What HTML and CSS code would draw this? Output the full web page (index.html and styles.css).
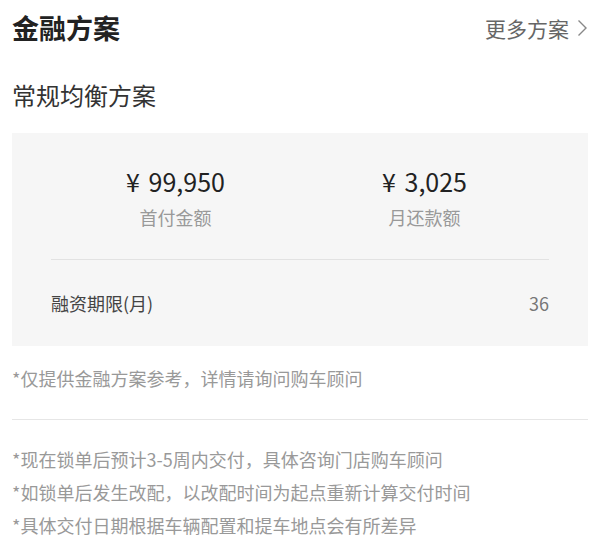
FILE: index.html
```html
<!DOCTYPE html>
<html lang="zh-CN">
<head>
  <meta charset="UTF-8">
  <meta name="viewport" content="width=device-width, initial-scale=1.0">
  <title>金融方案</title>
  <link rel="stylesheet" href="styles.css">
</head>
<body>
  <div class="page">
    <div class="header">
      <h1 class="title">金融方案</h1>
      <a class="more" href="#">更多方案
        <svg class="chevron" width="11" height="18" viewBox="0 0 11 18">
          <path d="M1.5 1.5 L9 9 L1.5 16.5" fill="none" stroke="#888" stroke-width="1.4"/>
        </svg>
      </a>
    </div>

    <h2 class="plan-name">常规均衡方案</h2>

    <div class="card">
      <div class="stats">
        <div class="stat">
          <div class="amount">¥ 99,950</div>
          <div class="label">首付金额</div>
        </div>
        <div class="stat">
          <div class="amount">¥ 3,025</div>
          <div class="label">月还款额</div>
        </div>
      </div>
      <div class="term-row">
        <span>融资期限(月)</span>
        <span class="term-value">36</span>
      </div>
    </div>

    <p class="note">*仅提供金融方案参考，详情请询问购车顾问</p>

    <div class="notes">
      <p>*现在锁单后预计3-5周内交付，具体咨询门店购车顾问</p>
      <p>*如锁单后发生改配，以改配时间为起点重新计算交付时间</p>
      <p>*具体交付日期根据车辆配置和提车地点会有所差异</p>
    </div>
  </div>
</body>
</html>
```

FILE: styles.css
```css
body {
  font-family: "Noto Sans CJK SC", "Noto Sans", sans-serif;
  margin: 0;
  padding: 0;
  background-color: #fff;
  color: #333;
}
.page {
  padding: 0 7px 0 12px;
}
.header {
  display: flex;
  justify-content: space-between;
  align-items: center;
  height: 56px;
}
.title {
  margin: 0;
  font-size: 27px;
  font-weight: bold;
  color: #222;
  line-height: 36px;
}
.more {
  display: flex;
  align-items: center;
  gap: 8px;
  font-size: 21px;
  color: #666;
  text-decoration: none;
}
.plan-name {
  margin: 22px 0 0;
  font-size: 24px;
  font-weight: normal;
  color: #333;
  line-height: 34px;
}
.card {
  margin-top: 21px;
  background-color: #f6f6f6;
  padding: 0 39px;
}
.stats {
  display: flex;
  padding: 31px 0 29px;
  border-bottom: 1px solid #e2e2e2;
}
.stat {
  flex: 1;
  text-align: center;
}
.amount {
  font-size: 25px;
  line-height: 35px;
  color: #222;
  word-spacing: 3px;
}
.label {
  margin-top: 5px;
  font-size: 18px;
  line-height: 26px;
  color: #999;
}
.term-row {
  display: flex;
  justify-content: space-between;
  align-items: center;
  height: 86px;
  font-size: 18px;
  color: #444;
}
.term-value {
  color: #777;
}
.note {
  margin: 0;
  padding: 19px 0 28px;
  font-size: 18px;
  line-height: 26px;
  color: #999;
  border-bottom: 1px solid #e6e6e6;
}
.notes {
  padding-top: 23px;
}
.notes p {
  margin: 0;
  font-size: 18px;
  line-height: 33px;
  color: #999;
}
```
